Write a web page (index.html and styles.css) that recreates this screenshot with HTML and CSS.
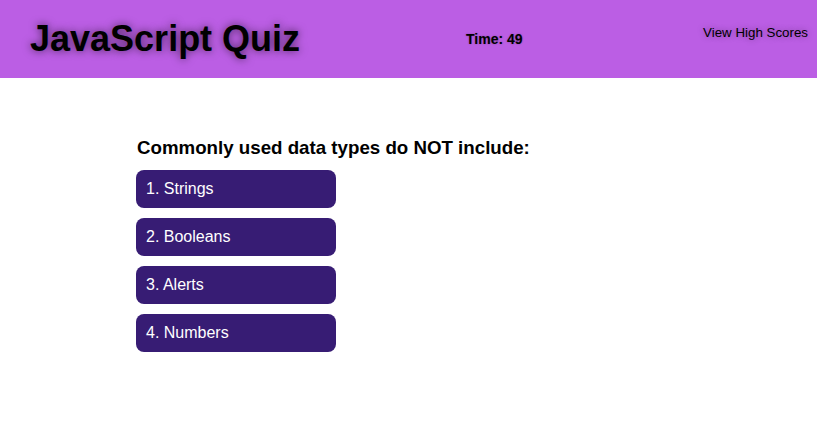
FILE: index.html
```html
<!DOCTYPE html>
<html>
<head>
<meta charset="utf-8">
<link rel="stylesheet" href="styles.css">
</head>
<body>
<header class="header">
  <h1 class="title">JavaScript Quiz</h1>
  <div class="timer">Time: 49</div>
  <a class="scores">View High Scores</a>
</header>
<main class="quiz">
  <h3 class="question">Commonly used data types do NOT include:</h3>
  <div class="choices">
    <button class="choice">1. Strings</button>
    <button class="choice">2. Booleans</button>
    <button class="choice">3. Alerts</button>
    <button class="choice">4. Numbers</button>
  </div>
</main>
</body>
</html>
```
FILE: styles.css
```css
html, body {
  margin: 0;
  padding: 0;
  background: #ffffff;
  font-family: "Liberation Sans", Arial, sans-serif;
}
.header {
  height: 78px;
  background: #bb5ee4;
  display: flex;
  align-items: center;
  padding: 0 9px 0 30px;
  box-sizing: border-box;
}
.title {
  margin: 0;
  font-size: 36px;
  font-weight: bold;
  color: #000;
  text-shadow: 0 0 8px rgba(0,0,0,0.6);
  width: 436px;
}
.timer {
  font-size: 14px;
  font-weight: bold;
  color: #000;
  flex: 1;
  text-shadow: 0 0 2px rgba(0,0,0,0.3);
}
.scores {
  font-size: 13.33px;
  color: #000;
  align-self: flex-start;
  margin-top: 25px;
  text-shadow: 0 0 6px rgba(0,0,0,0.35);
}
.quiz {
  padding: 59px 0 0 136px;
}
.question {
  margin: 0 0 11px 1px;
  font-size: 18.72px;
  font-weight: bold;
  color: #000;
}
.choices {
  display: flex;
  flex-direction: column;
  gap: 10px;
  align-items: flex-start;
}
.choice {
  width: 200px;
  height: 38px;
  background: #371c74;
  color: #fff;
  border: none;
  border-radius: 8px;
  font-family: "Liberation Sans", Arial, sans-serif;
  font-size: 16px;
  text-align: left;
  padding: 0 10px;
}
```
